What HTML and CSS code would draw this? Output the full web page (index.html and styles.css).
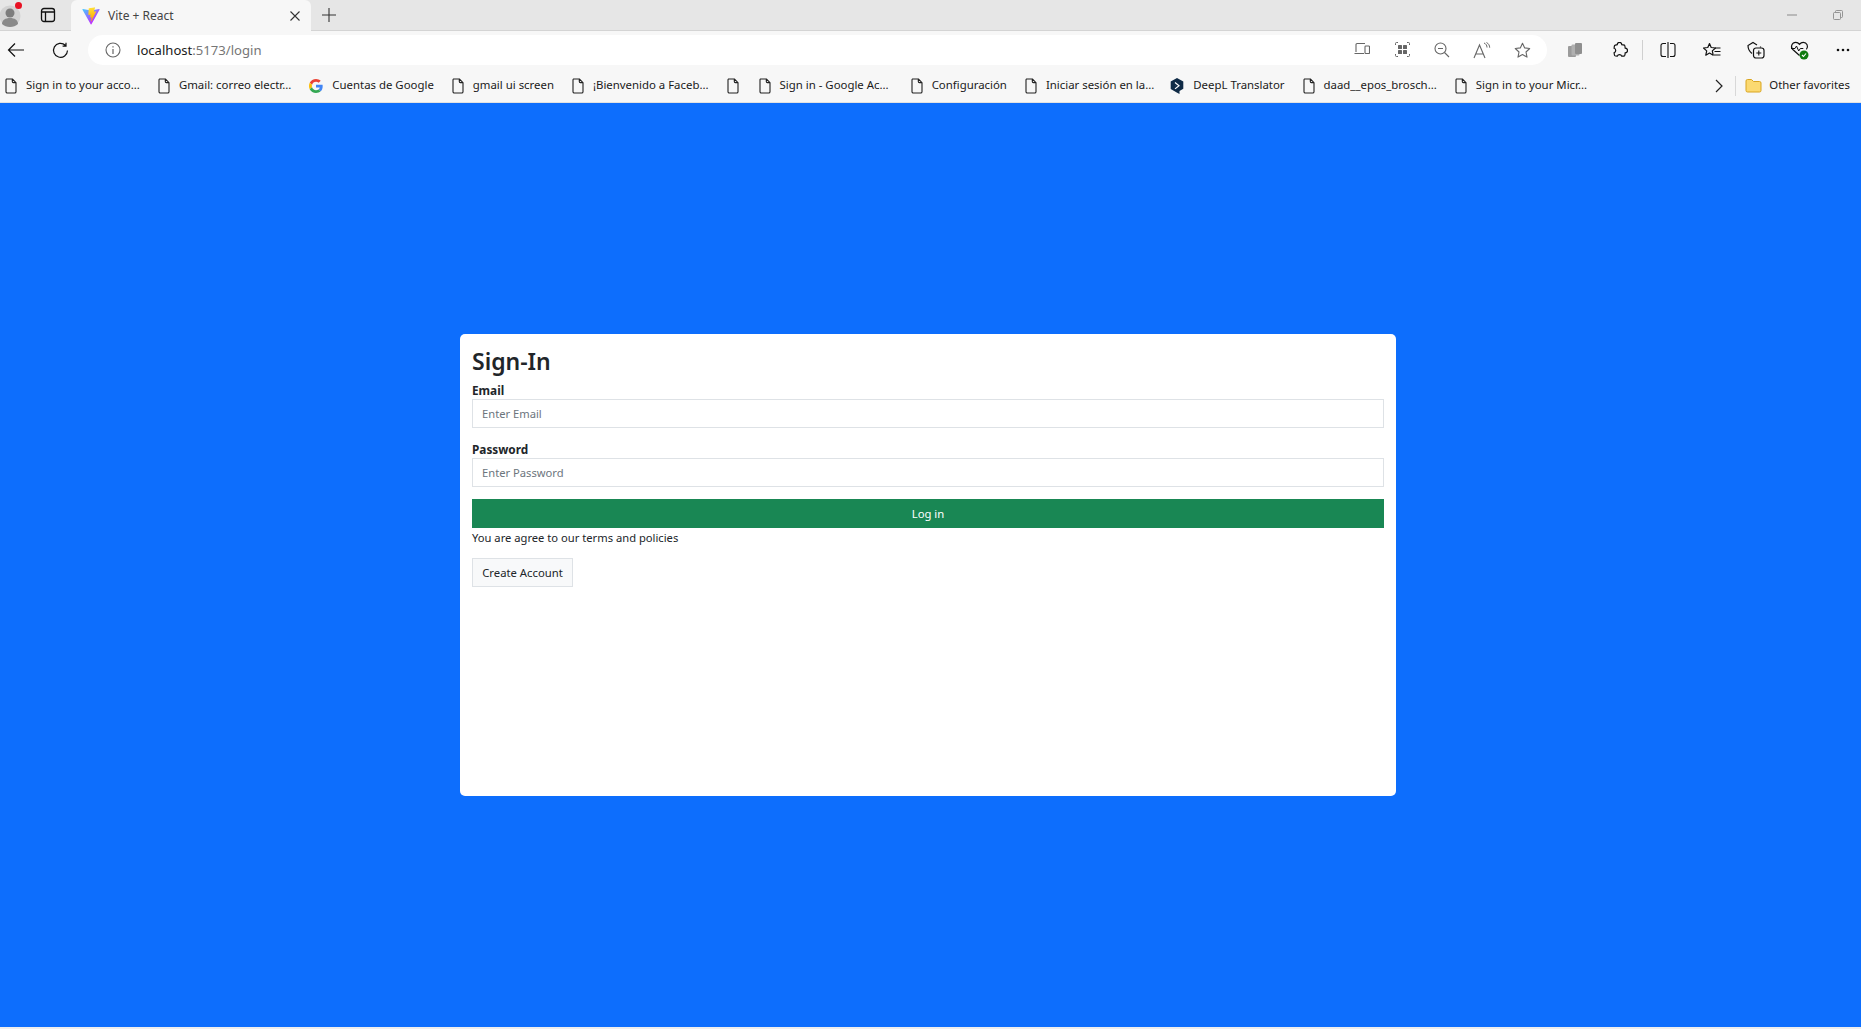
FILE: index.html
```html
<!DOCTYPE html>
<html lang="en">
<head>
    <meta charset="UTF-8">
    <meta name="viewport" content="width=device-width, initial-scale=1.0">
    <title>Vite + React</title>
    <link rel="stylesheet" href="styles.css">
</head>
<body>

<svg class="defs" width="0" height="0">
    <defs>
        <symbol id="doc" viewBox="0 0 12 16">
            <path d="M1.5 1h6l3.5 3.7v9a1.3 1.3 0 0 1-1.3 1.3H2.300a1.300 1.300 0 0 1-1.300-1.300V2a1 1 0 0 1 .5-1zM7.300 1.200v2.400a1 1 0 0 0 1 1h2.500" fill="none" stroke="#222" stroke-width="1.100"/>
        </symbol>
        <linearGradient id="vite-a" x1="6" y1="33" x2="235" y2="344" gradientUnits="userSpaceOnUse">
            <stop offset="0" stop-color="#41D1FF"/>
            <stop offset="1" stop-color="#BD34FE"/>
        </linearGradient>
        <linearGradient id="vite-b" x1="194" y1="8" x2="236" y2="292" gradientUnits="userSpaceOnUse">
            <stop offset="0" stop-color="#FFEA83"/>
            <stop offset=".08" stop-color="#FFDD35"/>
            <stop offset="1" stop-color="#FFA800"/>
        </linearGradient>
    </defs>
</svg>

<div class="browser">
    <div class="tabbar">
        <div class="profile">
            <svg width="21" height="24" viewBox="0 0 21 24">
                <circle cx="10" cy="12" r="10.500" fill="#d2d2d2"/>
                <circle cx="10" cy="9" r="4.500" fill="#7d7d7d"/>
                <path d="M2 20c0-4 3.500-6 8-6s8 2 8 6c-2 2-5 3-8 3s-6-1-8-3z" fill="#8a8a8a"/>
            </svg>
            <span class="red-dot"></span>
        </div>
        <div class="tab-strip-btn">
            <svg width="16" height="16" viewBox="0 0 16 16"><rect x="1.500" y="1.500" width="13" height="13" rx="2.500" fill="none" stroke="#111" stroke-width="1.300"/><path d="M1.500 5h13M5.500 5v9.500" fill="none" stroke="#111" stroke-width="1.300"/></svg>
        </div>
        <div class="tab">
            <svg class="vite" width="18" height="18" viewBox="0 0 410 404">
                <path d="M399.641 59.5246L215.643 388.545C211.844 395.338 202.084 395.378 198.228 388.618L10.5817 59.5563C6.38087 52.1896 12.6802 43.2665 21.0281 44.7586L205.223 77.6824C206.398 77.8924 207.601 77.8904 208.776 77.6763L389.119 44.8058C397.439 43.2894 403.768 52.1434 399.641 59.5246Z" fill="url(#vite-a)"/>
                <path d="M292.965 1.5744L156.801 28.2552C154.563 28.6937 152.906 30.5903 152.771 32.8664L144.395 174.33C144.198 177.662 147.258 180.248 150.51 179.498L188.42 170.749C191.967 169.931 195.172 173.055 194.443 176.622L183.18 231.775C182.422 235.487 185.907 238.661 189.532 237.56L212.947 230.446C216.577 229.344 220.065 232.527 219.297 236.242L201.398 322.875C200.278 328.294 207.486 331.249 210.492 326.603L212.5 323.5L323.454 102.072C325.312 98.3645 322.108 94.137 318.036 94.9228L279.014 102.454C275.347 103.161 272.227 99.746 273.262 96.1583L298.731 7.86689C299.767 4.27314 296.636 0.855181 292.965 1.5744Z" fill="url(#vite-b)"/>
            </svg>
            <span class="tab-title">Vite + React</span>
            <svg class="tab-close" width="10" height="10" viewBox="0 0 10 10"><path d="M.5.5l9 9M9.500.5l-9 9" stroke="#333" stroke-width="1.100"/></svg>
        </div>
        <div class="new-tab">
            <svg width="14" height="14" viewBox="0 0 14 14"><path d="M7 0v14M0 7h14" stroke="#333" stroke-width="1.100"/></svg>
        </div>
        <div class="window-controls">
            <svg width="10" height="10" viewBox="0 0 10 10"><path d="M0 5h10" stroke="#8a8a8a"/></svg>
            <svg width="10" height="10" viewBox="0 0 10 10"><path d="M2.500 2V1.500a1 1 0 0 1 1-1h5a1 1 0 0 1 1 1v5a1 1 0 0 1-1 1H8" fill="none" stroke="#8a8a8a" stroke-width=".9"/><rect x=".5" y="2.500" width="7" height="7" rx="1" fill="none" stroke="#8a8a8a" stroke-width=".9"/></svg>
        </div>
    </div>

    <div class="toolbar">
        <div class="nav-btn back">
            <svg width="18" height="16" viewBox="0 0 18 16"><path d="M17 8H1.500M8 1.500L1.500 8 8 14.500" fill="none" stroke="#111" stroke-width="1.200"/></svg>
        </div>
        <div class="nav-btn reload">
            <svg width="17" height="17" viewBox="0 0 17 17"><path d="M13.300 3.200A7 7 0 1 0 15.500 8.500M14 .8v3.400h-3.400" fill="none" stroke="#111" stroke-width="1.200"/></svg>
        </div>
        <div class="address">
            <svg class="info" width="16" height="16" viewBox="0 0 16 16"><circle cx="8" cy="8" r="7" fill="none" stroke="#666" stroke-width="1.100"/><path d="M8 7v5M8 4.200v1.300" stroke="#666" stroke-width="1.200"/></svg>
            <span class="url">localhost<span class="url-rest">:5173/login</span></span>
            <div class="address-icons">
                <div class="addr-btn">
                    <svg width="16" height="14" viewBox="0 0 16 14"><path d="M2 10V2.500a1 1 0 0 1 1-1h8M.5 11.500H10" fill="none" stroke="#666" stroke-width="1.100"/><rect x="11" y="4" width="4.500" height="7.500" rx=".8" fill="none" stroke="#666" stroke-width="1.100"/></svg>
                </div>
                <div class="addr-btn">
                    <svg width="15" height="15" viewBox="0 0 15 15"><path d="M.5 3V1.500a1 1 0 0 1 1-1H3M12 .5h1.500a1 1 0 0 1 1 1V3M14.500 12v1.500a1 1 0 0 1-1 1H12M3 14.500H1.500a1 1 0 0 1-1-1V12" fill="none" stroke="#666"/><rect x="3" y="3" width="4" height="4" rx=".6" fill="#666"/><rect x="8" y="3" width="4" height="4" rx=".6" fill="#666"/><rect x="3" y="8" width="4" height="4" rx=".6" fill="#666"/><rect x="8" y="8" width="4" height="4" rx=".6" fill="#666"/></svg>
                </div>
                <div class="addr-btn">
                    <svg width="16" height="16" viewBox="0 0 16 16"><circle cx="6.500" cy="6.500" r="5.500" fill="none" stroke="#666" stroke-width="1.100"/><path d="M4 6.500h5M10.500 10.500L15 15" fill="none" stroke="#666" stroke-width="1.100"/></svg>
                </div>
                <div class="addr-btn">
                    <svg width="18" height="17" viewBox="0 0 18 17"><path d="M1 16L6.500 3 12 16M3 12h7" fill="none" stroke="#666" stroke-width="1.100"/><path d="M11 1c2 .8 3 2.400 3 4.500M13.500.5c2 1 3.200 3 3.200 5.200" fill="none" stroke="#666"/></svg>
                </div>
                <div class="addr-btn">
                    <svg width="17" height="17" viewBox="0 0 17 17"><path d="M8.500 1.200l2.200 4.700 5 .6-3.700 3.500 1 5.100-4.500-2.600L4 15.100l1-5.100L1.300 6.500l5-.6z" fill="none" stroke="#666" stroke-width="1.100" stroke-linejoin="round"/></svg>
                </div>
            </div>
        </div>
        <div class="tool">
            <svg width="16" height="16" viewBox="0 0 16 16"><rect x="1" y="4" width="8" height="11" rx="1" fill="#9b9b9b"/><rect x="4.500" y="2.500" width="8" height="11" rx="1" fill="#b0b0b0"/><rect x="8" y="1" width="7" height="11" rx="1" fill="#8f8f8f"/></svg>
        </div>
        <div class="tool">
            <svg width="17" height="17" viewBox="0 0 17 17"><path d="M6.200 2.700a2.300 2.300 0 0 1 4.600 0c1 .2 2 .1 2.700.4.500.4.500 1.800.7 3.100a2.300 2.300 0 0 1 0 4.600c-.1 1.200-.1 2.300-.6 2.900-.7.500-1.800.4-2.900.5a2.300 2.300 0 0 0-4.400 0c-1 0-2-.1-2.600-.6-.5-.6-.4-1.600-.6-2.900a2.300 2.300 0 0 0 0-4.400c.1-1.200.1-2.200.6-2.900.6-.5 1.600-.5 2.500-.7z" fill="none" stroke="#111" stroke-width="1.200"/></svg>
        </div>
        <span class="tool-sep"></span>
        <div class="tool">
            <svg width="16" height="16" viewBox="0 0 16 16"><path d="M6 1.500H3a2 2 0 0 0-2 2v9a2 2 0 0 0 2 2h3M10 1.500h3a2 2 0 0 1 2 2v9a2 2 0 0 1-2 2h-3M8 0v16" fill="none" stroke="#111" stroke-width="1.100"/></svg>
        </div>
        <div class="tool">
            <svg width="18" height="17" viewBox="0 0 18 17"><path d="M6.500 1.500l1.700 4 4.300.5-3.200 2.900.9 4.300-3.700-2.200-3.700 2.200.9-4.300L.5 6l4.300-.5z" fill="none" stroke="#111" stroke-width="1.200" stroke-linejoin="round"/><path d="M12 6h5.500M11.500 9.500h6M11 13h6.500" stroke="#111" stroke-width="1.100"/></svg>
        </div>
        <div class="tool">
            <svg width="18" height="18" viewBox="0 0 18 18"><path d="M5 12.500C2.500 10.500 1 8 1 4.500L6 1.500l4 2.400M13.500 6.500V5.500" fill="none" stroke="#111" stroke-width="1.200"/><rect x="6.500" y="7" width="10.500" height="10" rx="2.500" fill="none" stroke="#111" stroke-width="1.200"/><path d="M11.800 9.500v5M9.300 12h5" stroke="#111" stroke-width="1.100"/></svg>
        </div>
        <div class="tool">
            <svg width="20" height="19" viewBox="0 0 20 19"><path d="M9.500 14.500L2.800 8.500a4.200 4.200 0 0 1 3-7.200c1.500 0 2.800.8 3.700 2 .9-1.200 2.200-2 3.700-2a4.200 4.200 0 0 1 3.200 7" fill="none" stroke="#111" stroke-width="1.200"/><path d="M1 7.500h4l1.500-2.500 2.200 5 1.600-2.500h3" fill="none" stroke="#111"/><circle cx="14" cy="14" r="4.500" fill="#107c10"/><path d="M12 14l1.500 1.500 2.500-3" fill="none" stroke="#fff" stroke-width="1.100"/></svg>
        </div>
        <div class="tool more">
            <svg width="14" height="4" viewBox="0 0 14 4"><circle cx="2" cy="2" r="1.300" fill="#111"/><circle cx="7" cy="2" r="1.300" fill="#111"/><circle cx="12" cy="2" r="1.300" fill="#111"/></svg>
        </div>
    </div>

    <div class="bookmarks">
        <div class="bookmark-list">
            <a class="bookmark"><svg class="doc"><use href="#doc"/></svg>Sign in to your acco...</a>
            <a class="bookmark"><svg class="doc"><use href="#doc"/></svg>Gmail: correo electr...</a>
            <a class="bookmark">
                <svg class="fav" width="14" height="14" viewBox="0 0 48 48">
                    <path fill="#EA4335" d="M24 9.500c3.500 0 6.700 1.200 9.200 3.600l6.900-6.900C35.900 2.400 30.500 0 24 0 14.600 0 6.500 5.400 2.600 13.200l8 6.200C12.400 13.700 17.700 9.500 24 9.500z"/>
                    <path fill="#4285F4" d="M46.900 24.500c0-1.600-.1-3.100-.4-4.500H24v9h12.900c-.6 3-2.200 5.500-4.700 7.200l7.700 6c4.500-4.200 7-10.300 7-17.700z"/>
                    <path fill="#FBBC05" d="M10.500 28.600c-.5-1.400-.8-3-.8-4.600s.3-3.200.8-4.600l-8-6.200C.9 16.500 0 20.100 0 24s.9 7.500 2.600 10.800z"/>
                    <path fill="#34A853" d="M24 48c6.500 0 11.900-2.100 15.900-5.800l-7.700-6c-2.200 1.400-4.900 2.300-8.200 2.300-6.300 0-11.600-4.200-13.500-9.900l-8 6.200C6.500 42.600 14.600 48 24 48z"/>
                </svg>Cuentas de Google</a>
            <a class="bookmark"><svg class="doc"><use href="#doc"/></svg>gmail ui screen</a>
            <a class="bookmark"><svg class="doc"><use href="#doc"/></svg>¡Bienvenido a Faceb...</a>
            <a class="bookmark blank"><svg class="doc"><use href="#doc"/></svg></a>
            <a class="bookmark wider"><svg class="doc"><use href="#doc"/></svg>Sign in - Google Ac...</a>
            <a class="bookmark"><svg class="doc"><use href="#doc"/></svg>Configuración</a>
            <a class="bookmark narrower"><svg class="doc"><use href="#doc"/></svg>Iniciar sesión en la...</a>
            <a class="bookmark">
                <svg class="fav" width="14" height="16" viewBox="0 0 14 16">
                    <path d="M7 0l6.300 3.500v7.200L9.500 13v3l-2.800-1.600L.7 11V3.500z" fill="#0f2b46"/>
                    <path d="M5 4.500l4 3.200-4 3.200M5 7.700h.1" fill="none" stroke="#fff" stroke-width="1.200"/>
                </svg>DeepL Translator</a>
            <a class="bookmark"><svg class="doc"><use href="#doc"/></svg>daad__epos_brosch...</a>
            <a class="bookmark"><svg class="doc"><use href="#doc"/></svg>Sign in to your Micr...</a>
        </div>
        <svg class="chevron" width="8" height="14" viewBox="0 0 8 14"><path d="M1 1l6 6-6 6" fill="none" stroke="#222" stroke-width="1.200"/></svg>
        <span class="bookmark-sep"></span>
        <a class="bookmark other">
            <svg width="17" height="15" viewBox="0 0 17 15"><path d="M1 3a1.500 1.500 0 0 1 1.500-1.500h4L8.500 3.500h6A1.500 1.500 0 0 1 16 5v7.500a1.500 1.500 0 0 1-1.500 1.500h-12A1.500 1.500 0 0 1 1 12.500z" fill="#fbd971" stroke="#d9a520"/></svg>Other favorites</a>
    </div>
</div>

<main class="page">
    <div class="card">
        <h2>Sign-In</h2>
        <form>
            <div class="field">
                <label for="email">Email</label>
                <input id="email" type="email" placeholder="Enter Email">
            </div>
            <div class="field">
                <label for="password">Password</label>
                <input id="password" type="password" placeholder="Enter Password">
            </div>
            <button type="button" class="btn-login">Log in</button>
            <p class="terms">You are agree to our terms and policies</p>
            <button type="button" class="btn-create">Create Account</button>
        </form>
    </div>
</main>
<div class="window-edge"></div>

</body>
</html>
```

FILE: styles.css
```css
:root {
    --primary-color: #0d6efd;
    --success-color: #198754;
    --chrome-color: #f7f7f7;
    --strip-color: #e6e6e6;
    --text-color: #212529;
    --font-family: 'Noto Sans', 'Open Sans', sans-serif;
}

* {
    box-sizing: border-box;
}

html, body {
    height: 100%;
}

body {
    margin: 0;
    display: flex;
    flex-direction: column;
    font-family: var(--font-family);
    color: var(--text-color);
    background-color: var(--strip-color);
    overflow: hidden;
}

.defs {
    position: absolute;
}

svg {
    display: block;
    flex: none;
}

/* browser chrome */
.tabbar {
    display: flex;
    align-items: center;
    height: 31px;
    background-color: var(--strip-color);
    border-bottom: 1px solid #d4d4d4;
}

.profile {
    position: relative;
    width: 28px;
    display: flex;
    padding-top: 2px;
}

.red-dot {
    position: absolute;
    top: 0;
    left: 15px;
    width: 7px;
    height: 7px;
    border-radius: 50%;
    background-color: #e81123;
}

.tab-strip-btn {
    width: 40px;
    display: flex;
    justify-content: center;
}

.tab {
    display: flex;
    align-items: center;
    align-self: stretch;
    width: 240px;
    height: 31px;
    margin-left: 3px;
    padding: 0 11px;
    background-color: var(--chrome-color);
    border-radius: 6px 6px 0 0;
    font-size: 12px;
    color: #444;
}

.tab-title {
    margin-left: 8px;
    padding-bottom: 1px;
    flex: 1;
}

.new-tab {
    width: 36px;
    display: flex;
    justify-content: center;
}

.window-controls {
    display: flex;
    align-items: center;
    gap: 36px;
    margin-left: auto;
    padding-right: 18px;
}

.toolbar {
    display: flex;
    align-items: center;
    height: 38px;
    background-color: var(--chrome-color);
}

.nav-btn {
    display: flex;
    justify-content: center;
    width: 32px;
}

.nav-btn.reload {
    width: 44px;
    margin-left: 6px;
}

.address {
    display: flex;
    align-items: center;
    flex: 1;
    height: 30px;
    margin-left: 6px;
    padding: 0 5px 0 17px;
    background-color: white;
    border-radius: 15px;
}

.url {
    margin-left: 16px;
    font-size: 13.1px;
    color: #1a1a1a;
}

.url-rest {
    color: #767676;
}

.address-icons {
    display: flex;
    margin-left: auto;
}

.addr-btn {
    display: flex;
    justify-content: center;
    width: 40px;
}

.tool {
    display: flex;
    justify-content: center;
    width: 44px;
}

.address + .tool {
    margin-left: 6px;
}

.tool-sep {
    width: 1px;
    height: 20px;
    margin: 0 3px 0 1px;
    background-color: #d0d0d0;
}

.tool.more {
    width: 39px;
    padding-left: 3px;
}

.bookmarks {
    display: flex;
    align-items: center;
    height: 34px;
    padding: 0 0 2px 5px;
    background-color: var(--chrome-color);
    border-bottom: 1px solid #e2e2e2;
}

.bookmark-list {
    display: flex;
    align-items: center;
    gap: 18px;
    flex: 1;
}

.bookmark {
    display: flex;
    align-items: center;
    gap: 9px;
    font-size: 11.4px;
    line-height: 15px;
    color: #1a1a1a;
    white-space: nowrap;
}

.bookmark svg {
    margin-top: 2px;
}

.bookmark.blank {
    padding-right: 2px;
}

.bookmark.wider {
    padding-right: 4px;
}

.bookmark.narrower {
    margin-right: -2px;
}

.doc {
    width: 12px;
    height: 16px;
}

.chevron {
    margin: 2px 12px 0 0;
}

.bookmark-sep {
    width: 1px;
    height: 20px;
    margin: 2px 9px 0 0;
    background-color: #d8d8d8;
}

.bookmark.other {
    padding-right: 11px;
    gap: 7px;
}

/* login page */
.page {
    flex: 1;
    display: flex;
    justify-content: center;
    align-items: center;
    padding-right: 5px;
    background-color: var(--primary-color);
}

.window-edge {
    height: 2px;
    background-color: #eeeeee;
}

.card {
    width: 936px;
    height: 462px;
    padding: 12px;
    background-color: white;
    border-radius: 5px;
}

.card h2 {
    margin: 0 0 4px;
    font-size: 23px;
    font-weight: 600;
    line-height: 31px;
}

.field {
    margin-bottom: 11px;
}

label {
    display: block;
    font-size: 11.8px;
    font-weight: 700;
    line-height: 18px;
}

.field + .field label {
    padding-top: 1px;
}

input {
    display: block;
    width: 100%;
    height: 29px;
    padding: 0 9px;
    font-family: inherit;
    font-size: 11.200px;
    color: var(--text-color);
    background-color: white;
    border: 1px solid #dee2e6;
    border-radius: 0;
    outline: none;
}

input::placeholder {
    color: #6c757d;
}

button {
    font-family: inherit;
    font-size: 11.300px;
    height: 29px;
    border-radius: 0;
    cursor: pointer;
}

.btn-login {
    display: block;
    width: 100%;
    margin-top: 12px;
    color: white;
    background-color: var(--success-color);
    border: none;
}

.terms {
    margin: 0 0 10px;
    font-size: 11.200px;
    line-height: 20px;
}

.btn-create {
    width: 101px;
    padding: 0;
    color: var(--text-color);
    background-color: #f8f9fa;
    border: 1px solid #dee2e6;
}
```
